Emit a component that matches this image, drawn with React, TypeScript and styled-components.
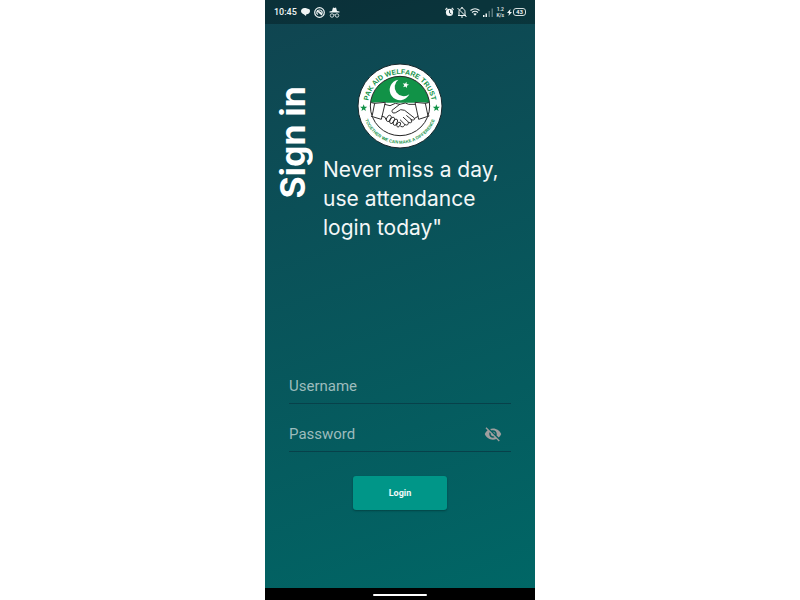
import React, { useState } from "react";
import styled, { createGlobalStyle } from "styled-components";

const GlobalStyle = createGlobalStyle`
  * { box-sizing: border-box; }
  body { margin: 0; background: #ffffff; font-family: Roboto, sans-serif; }
`;

const Phone = styled.div`
  display: flex;
  flex-direction: column;
  width: 100%;
  max-width: 270px;
  min-height: 100vh;
  margin: 0 auto;
  background: linear-gradient(160deg, #104450 0%, #006766 100%);
`;

const StatusBar = styled.header`
  display: flex;
  align-items: center;
  justify-content: space-between;
  height: 24px;
  padding: 0 9px;
  background: rgba(0, 0, 0, 0.28);
  color: #f0f5f5;
`;

const StatusGroup = styled.div<{ $gap: number }>`
  display: flex;
  align-items: center;
  gap: ${({ $gap }) => $gap}px;
`;

const Clock = styled.time`
  font-size: 9px;
  line-height: 12px;
  font-weight: 500;
`;

const Speed = styled.span`
  display: flex;
  flex-direction: column;
  font-size: 5px;
  line-height: 6px;
  font-weight: 500;
  text-align: center;
`;

const Battery = styled.span`
  display: flex;
  align-items: center;
  gap: 1px;
`;

const BatteryLevel = styled.span`
  padding: 0 2px;
  border: 1px solid #d5dfdf;
  border-radius: 3px;
  font-size: 6px;
  line-height: 6px;
  font-weight: 700;
`;

const Content = styled.main`
  display: flex;
  flex: 1;
  flex-direction: column;
  padding: 39px 24px 24px;
`;

const Intro = styled.section`
  display: grid;
  grid-template-columns: 36px 1fr;
  column-gap: 12px;
  margin: 0 -10px 0 -14px;
`;

const Title = styled.h1`
  align-self: start;
  justify-self: center;
  margin: 23px 0 0;
  writing-mode: vertical-rl;
  transform: rotate(180deg);
  color: #ffffff;
  font-family: Inter, sans-serif;
  font-size: 34px;
  line-height: 36px;
  font-weight: 700;
  white-space: nowrap;
`;

const Message = styled.div`
  display: flex;
  flex-direction: column;
  gap: 6px;
`;

const Logo = styled.svg`
  display: block;
  width: 86px;
  height: 86px;
  margin-left: 34px;
`;

const Tagline = styled.p`
  margin: 0;
  color: #f3f7f7;
  font-family: Inter, sans-serif;
  font-size: 21px;
  line-height: 29px;
  font-weight: 400;
  white-space: nowrap;
`;

const Form = styled.form`
  display: flex;
  flex-direction: column;
  margin-top: 126px;
`;

const Field = styled.div`
  display: flex;
  align-items: center;
  height: 36px;
  margin-bottom: 12px;
  padding-right: 9px;
  border-bottom: 1px solid #07414a;
`;

const Input = styled.input`
  flex: 1;
  min-width: 0;
  padding: 0;
  border: 0;
  outline: 0;
  background: transparent;
  color: #ffffff;
  font-family: Roboto, sans-serif;
  font-size: 15px;
  line-height: 20px;
  &::placeholder { color: #9dbcbc; opacity: 1; }
`;

const EyeButton = styled.button`
  display: flex;
  padding: 0;
  border: 0;
  background: transparent;
  color: #9e9e9e;
  cursor: pointer;
`;

const LoginButton = styled.button`
  align-self: center;
  width: 94px;
  height: 34px;
  margin-top: 12px;
  border: 0;
  border-radius: 3px;
  background: #009688;
  box-shadow: 0 1px 2px rgba(0, 0, 0, 0.3);
  color: #f2fafa;
  font-family: Roboto, sans-serif;
  font-size: 9px;
  font-weight: 700;
  cursor: pointer;
`;

const NavBar = styled.footer`
  display: flex;
  align-items: center;
  justify-content: center;
  height: 12px;
  padding-top: 2px;
  background: #000000;
`;

const HomeIndicator = styled.span`
  width: 54px;
  height: 2px;
  border-radius: 1px;
  background: #ffffff;
`;

const star = "M0-12 2.9-4 11.4-3.7 4.7 1.5 7.1 9.7 0 5-7.1 9.7-4.7 1.5-11.4-3.7-2.9-4Z";

function TrustLogo() {
  return (
    <Logo viewBox="0 0 258 258" role="img" aria-label="Pak Aid Welfare Trust">
      <defs>
        <path id="topArc" d="M33 129A96 96 0 0 1 225 129" />
        <path id="bottomArc" d="M16 129A113 113 0 0 0 242 129" />
        <clipPath id="innerCircle"><circle cx="129" cy="129" r="89" /></clipPath>
      </defs>
      <circle cx="129" cy="129" r="126" fill="#fff" stroke="#18282c" strokeWidth="3" />
      <g clipPath="url(#innerCircle)">
        <path d="M35 30H223V119H35Z" fill="#119247" />
        <path d="M35 120 82 117 96 123 116 119 137 122 168 123 177 117 223 121V160L182 167 176 177 159 188 142 193H109L88 177 81 166 35 156Z" fill="#fff" />
      </g>
      <circle cx="129" cy="129" r="89" fill="none" stroke="#252525" strokeWidth="3" />
      <path d="M124 50A31 31 0 1 0 157 94A26 26 0 1 1 124 50Z" fill="#fff" />
      <path d={star} transform="translate(146 66) rotate(12) scale(.85)" fill="#fff" />
      <g fill="none" stroke="#303030" strokeWidth="3" strokeLinejoin="round" strokeLinecap="round">
        <path d="M44 119 53 121 46 156M53 121 85 118 73 169 43 160M214 119 205 121 213 159M205 121 174 118 185 169 216 159" />
        <path d="M83 124 99 128 115 121 128 124M75 160 83 162 88 171M128 124 145 120 155 124 174 124M128 124 105 142Q104 153 116 149L131 140 143 142 171 164Q176 172 165 171L149 158M183 160 173 166M162 170Q169 181 156 179L139 163M154 179Q155 189 144 185L130 171M143 185Q141 195 131 190L122 181" />
        <path d="M88 167 94 158Q102 154 103 163L96 175Q87 178 88 167ZM98 174 104 164Q113 160 113 169L106 181Q97 184 98 174ZM108 179 114 169Q122 166 122 174L117 186Q108 190 108 179ZM119 185 124 178Q132 176 131 183L126 191Q119 195 119 185Z" fill="#fff" />
      </g>
      <g fill="#119247">
        <path d={star} transform="translate(20 135) scale(.95)" />
        <path d={star} transform="translate(238 135) scale(.95)" />
        <g fontFamily="Liberation Sans, sans-serif" fontWeight="700" textAnchor="middle">
          <text fontSize="21"><textPath href="#topArc" startOffset="50%">PAK AID WELFARE TRUST</textPath></text>
          <text fontSize="13"><textPath href="#bottomArc" startOffset="50%">TOGETHER WE CAN MAKE A DIFFERENCE</textPath></text>
        </g>
      </g>
    </Logo>
  );
}

function ChatIcon() {
  return (
    <svg width="9" height="10" viewBox="0 0 20 20" fill="currentColor" aria-hidden="true">
      <path d="M8 1C3 1 0 4 0 8s3 6 6 7l5 4 1-4c5 0 8-3 8-7 0-3-2-5-5-5-2-1-4-2-7-2Z" />
    </svg>
  );
}

function BadgeIcon() {
  return (
    <svg width="11" height="11" viewBox="0 0 22 22" fill="none" stroke="currentColor" strokeWidth="2.4" aria-hidden="true">
      <circle cx="11" cy="11" r="9.6" />
      <path d="M8 15c-5-3-2-9 3-9 5 0 7 5 4 9M6 7l10 9M10 9l4 3" />
    </svg>
  );
}

function IncognitoIcon() {
  return (
    <svg width="11" height="11" viewBox="0 0 22 22" aria-hidden="true">
      <path d="M6 8 8 1l3 1 3-1 2 7 5 1v2H1V9Z" fill="currentColor" />
      <g fill="none" stroke="currentColor" strokeWidth="1.6">
        <circle cx="6" cy="17" r="3.5" /><circle cx="16" cy="17" r="3.5" /><path d="M9 16q2-1 4 0" />
      </g>
    </svg>
  );
}

function AlarmIcon() {
  return (
    <svg width="9" height="10" viewBox="0 0 20 20" aria-hidden="true">
      <circle cx="10" cy="11" r="8" fill="currentColor" />
      <path d="M1 5 5 1M15 1l4 4" stroke="currentColor" strokeWidth="2.5" />
      <path d="M10 6v6l4 2" fill="none" stroke="#0e333b" strokeWidth="2" />
    </svg>
  );
}

function MutedBellIcon() {
  return (
    <svg width="10" height="11" viewBox="0 0 20 22" fill="none" stroke="currentColor" strokeWidth="2" aria-hidden="true">
      <path d="M4 17h12V9c0-3-2-5-5-6V1H9v2C6 4 4 6 4 9ZM2 17h16M8 20h4M1 2l18 18" />
    </svg>
  );
}

function WifiIcon() {
  return (
    <svg width="10" height="8" viewBox="0 0 20 16" fill="none" stroke="currentColor" strokeWidth="2.3" aria-hidden="true">
      <path d="M1 5q9-7 18 0M4 9q6-5 12 0" />
      <path d="m6.500 11.500 3.500 4 3.500-4q-3.500-2-7 0Z" fill="currentColor" stroke="none" />
    </svg>
  );
}

function SignalIcon() {
  return (
    <svg width="10" height="9" viewBox="0 0 20 18" fill="currentColor" aria-hidden="true">
      <path d="M0 14h3v4H0ZM5 11h3v7H5Z" />
      <path d="M11 6h3v12h-3ZM17 1h3v17h-3Z" opacity=".35" />
    </svg>
  );
}

function BoltIcon() {
  return (
    <svg width="5" height="7" viewBox="0 0 10 14" fill="currentColor" aria-hidden="true">
      <path d="M7 0 0 8h4l-1 6 7-8H6Z" />
    </svg>
  );
}

function EyeOffIcon() {
  return (
    <svg width="18" height="18" viewBox="0 0 24 24" fill="currentColor" aria-hidden="true">
      <path d="M12 7c2.760 0 5 2.240 5 5 0 .65-.13 1.260-.36 1.830l2.920 2.920c1.510-1.260 2.700-2.890 3.430-4.750-1.730-4.390-6-7.500-11-7.500-1.400 0-2.740.25-3.980.7l2.160 2.160C10.740 7.130 11.350 7 12 7zM2 4.270l2.280 2.280.46.46C3.080 8.300 1.780 10.020 1 12c1.730 4.390 6 7.500 11 7.500 1.550 0 3.030-.3 4.380-.84l.42.42L19.730 22 21 20.730 3.270 3 2 4.270zM7.530 9.800l1.550 1.550c-.05.21-.08.43-.08.65 0 1.660 1.340 3 3 3 .22 0 .44-.03.65-.08l1.550 1.550c-.67.33-1.410.53-2.200.53-2.760 0-5-2.240-5-5 0-.79.2-1.530.53-2.200zm4.310-.78 3.150 3.150.02-.16c0-1.660-1.340-3-3-3l-.17.01z" />
    </svg>
  );
}

export default function App() {
  const [visible, setVisible] = useState(false);
  return (
    <>
      <GlobalStyle />
      <Phone>
        <StatusBar>
          <StatusGroup $gap={4}>
            <Clock>10:45</Clock>
            <ChatIcon />
            <BadgeIcon />
            <IncognitoIcon />
          </StatusGroup>
          <StatusGroup $gap={3}>
            <AlarmIcon />
            <MutedBellIcon />
            <WifiIcon />
            <SignalIcon />
            <Speed><span>1.2</span><span>K/s</span></Speed>
            <Battery><BoltIcon /><BatteryLevel>43</BatteryLevel></Battery>
          </StatusGroup>
        </StatusBar>
        <Content>
          <Intro>
            <Title>Sign in</Title>
            <Message>
              <TrustLogo />
              <Tagline>Never miss a day,<br />use attendance<br />login today"</Tagline>
            </Message>
          </Intro>
          <Form onSubmit={(event) => event.preventDefault()}>
            <Field>
              <Input type="text" placeholder="Username" aria-label="Username" autoComplete="username" />
            </Field>
            <Field>
              <Input type={visible ? "text" : "password"} placeholder="Password" aria-label="Password" autoComplete="current-password" />
              <EyeButton type="button" aria-label="Toggle password visibility" aria-pressed={visible} onClick={() => setVisible(!visible)}>
                <EyeOffIcon />
              </EyeButton>
            </Field>
            <LoginButton type="submit">Login</LoginButton>
          </Form>
        </Content>
        <NavBar><HomeIndicator /></NavBar>
      </Phone>
    </>
  );
}
